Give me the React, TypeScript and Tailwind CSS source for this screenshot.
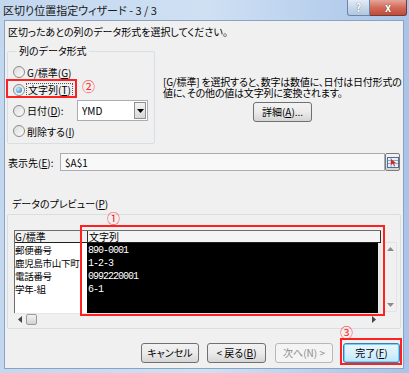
import React from 'react';

const ui = "font-['Noto_Sans_CJK_JP',sans-serif] [font-feature-settings:'palt']";

const Radio: React.FC<{ checked?: boolean }> = ({ checked }) => (
    <span className="w-[12px] h-[12px] shrink-0 rounded-full border border-[#8a8a8a] bg-gradient-to-br from-[#dcdcdc] to-[#fbfbfb] flex items-center justify-center">
        {checked && <span className="w-[6px] h-[6px] rounded-full bg-[radial-gradient(circle_at_35%_35%,#c4ecff,#1c6fb2)]" />}
    </span>
);

const Btn: React.FC<{ children: React.ReactNode; w: string; kind?: 'normal' | 'disabled' | 'focus' }> = ({ children, w, kind = 'normal' }) => {
    const base = 'h-[20px] rounded-[3px] border flex items-center justify-center text-[10px] leading-[12px]';
    if (kind === 'disabled') {
        return <div className={`${base} ${w} border-[#b5b9bc] bg-[#f4f4f4] text-[#8d8d8d]`}>{children}</div>;
    }
    if (kind === 'focus') {
        return (
            <div className={`${base} ${w} border-[#3c7fb1] bg-gradient-to-b from-[#eaf6fd] via-[#d9f0fc] to-[#bee6fd] shadow-[inset_0_0_0_1px_#6fd1ff] text-black`}>
                {children}
            </div>
        );
    }
    return (
        <div className={`${base} ${w} border-[#707070] bg-gradient-to-b from-[#f2f2f2] via-[#ebebeb] to-[#d5d5d5] text-black`}>{children}</div>
    );
};

export default function App() {
    return (
        <div className={`relative w-[409px] h-[373px] overflow-hidden flex flex-col bg-gradient-to-r from-[#c3d7ef] via-[#cfe0f3] to-[#a8c4e8] ${ui} text-black`}>
            {/* title bar */}
            <div className="h-[20px] shrink-0 flex items-start">
                <div className="pl-[3px] pt-[2px] text-[11px] leading-[16px] text-[#1a1a1a]">区切り位置指定ウィザード - 3 / 3</div>
                <div className="ml-auto mr-[2px] flex">
                    <div className="w-[23px] h-[16px] rounded-bl-[3px] border border-t-0 border-[#6d84a3] bg-gradient-to-b from-[#e3ecf7] via-[#c8d7ea] to-[#b3c7e0] flex items-center justify-center text-[11px] font-bold text-white [text-shadow:0_0_1px_#3a4a60]">
                        ?
                    </div>
                    <div className="w-[37px] h-[16px] rounded-br-[3px] border border-l-0 border-t-0 border-[#6d3d3a] bg-gradient-to-b from-[#e5a598] via-[#d16b5a] to-[#c34a37] flex items-center justify-center text-[11px] font-bold text-white [text-shadow:0_0_1px_#4a1a10]">
                        x
                    </div>
                </div>
            </div>

            {/* client area */}
            <div className="ml-[4px] mr-[5px] mb-[4px] flex-1 bg-[#f0f0f0] border border-[#8ba3c2] pl-[3px] pr-[3px] flex flex-col">
                <div className="mt-[4px] text-[10px] leading-[14px]">区切ったあとの列のデータ形式を選択してください。</div>

                <div className="flex mt-[5px]">
                    <fieldset className="ml-[-1px] w-[148px] min-w-0 shrink-0 h-[100px] border border-[#d5dfe5] rounded-[2px] pl-[5px]">
                        <legend className="ml-[4px] px-[2px] text-[10px] leading-[14px]">列のデータ形式</legend>
                        <div className="mt-[7px] h-[14px] flex items-center gap-[2px] text-[10px]">
                            <Radio />
                            <span>G/標準(<u>G</u>)</span>
                        </div>
                        <div className="mt-[4px] h-[14px] flex items-center gap-[1px] text-[10px]">
                            <Radio checked />
                            <span className="border border-dotted border-[#555] px-[1px] leading-[12px]">文字列(<u>T</u>)</span>
                        </div>
                        <div className="mt-[3px] h-[21px] flex items-center text-[10px]">
                            <Radio />
                            <span className="ml-[2px] w-[50px]">日付(<u>D</u>):</span>
                            <div className="w-[71px] h-[21px] border border-[#abadb3] bg-white flex items-center">
                                <span className="pl-[4px] text-[10px]">YMD</span>
                                <div className="ml-auto mr-[1px] w-[12px] h-[17px] border border-[#8e8f8f] bg-gradient-to-b from-[#f2f2f2] to-[#d8d8d8] flex items-center justify-center">
                                    <svg width="7" height="4" viewBox="0 0 7 4">
                                        <path d="M0 0h7L3.5 4z" fill="#000" />
                                    </svg>
                                </div>
                            </div>
                        </div>
                        <div className="mt-[3px] h-[14px] flex items-center gap-[2px] text-[10px]">
                            <Radio />
                            <span>削除する(<u>I</u>)</span>
                        </div>
                    </fieldset>

                    <div className="ml-[8px] mt-[32px] flex flex-col">
                        <div className="text-[10px] leading-[11px] tracking-[-0.2px] whitespace-nowrap">
                            [G/標準] を選択すると、数字は数値に、日付は日付形式の
                            <br />
                            値に、その他の値は文字列に変換されます。
                        </div>
                        <div className="mt-[4px] ml-[90px]">
                            <Btn w="w-[59px]">
                                詳細(<u>A</u>)...
                            </Btn>
                        </div>
                    </div>
                </div>

                <div className="mt-[9px] h-[18px] flex items-center">
                    <span className="w-[52px] text-[10px]">表示先(<u>E</u>):</span>
                    <div className="w-[325px] h-[18px] border border-[#abadb3] bg-[#f8f8f8] flex items-center pl-[4px] text-[10px]">$A$1</div>
                    <div className="w-[15px] h-[18px] border border-[#7a7a7a] rounded-[2px] bg-gradient-to-b from-[#f4f4f4] to-[#d4d4d4] flex items-center justify-center">
                        <svg width="12" height="11" viewBox="0 0 12 11">
                            <rect x="0.5" y="0.5" width="11" height="10" fill="#e8f0fa" stroke="#4f6f99" />
                            <path d="M1 3.5h10M1 6.5h10M4 1v9" stroke="#8ea8c8" strokeWidth="1" />
                            <path d="M4 2l5 4-2 0 1 3-1 0.5-1-3-2 1.5z" fill="#d42a1a" />
                        </svg>
                    </div>
                </div>

                <div className="mt-[26px] ml-[4px] text-[10px] leading-[14px]">
                    データのプレビュー(<u>P</u>)
                </div>
                <div className="mt-[3px] ml-[-1px] w-[394px] h-[115px] border border-[#d5dfe5] rounded-[2px] pl-[6px] pt-[15px] flex flex-col">
                    <div className="flex">
                        <div className="w-[367px] flex flex-col border-l border-t border-[#6d6d6d]">
                            <div className="h-[12px] flex text-[10px] leading-[11px] border-b border-[#202020]">
                                <div className="w-[72px] bg-[#f0f0f0]">G/標準</div>
                                <div className="flex-1 bg-[#f4f4f4] border-l border-r border-[#303030] pl-[1px]">文字列</div>
                            </div>
                            <div className="h-[70px] flex">
                                <div className="w-[72px] shrink-0 bg-white pt-[1px] text-[9.5px] leading-[13px] tracking-[-0.3px] whitespace-nowrap overflow-hidden">
                                    <div>郵便番号</div>
                                    <div>鹿児島市山下町</div>
                                    <div>電話番号</div>
                                    <div>学年-組</div>
                                </div>
                                <div className="flex-1 bg-black text-white pt-[1px] pl-[1px] font-['Liberation_Mono',monospace] text-[10px] leading-[13px] tracking-[-1px] border-r-[3px] border-[#e8e8e8]">
                                    <div>890-0001</div>
                                    <div>1-2-3</div>
                                    <div>0992220001</div>
                                    <div>6-1</div>
                                </div>
                            </div>
                        </div>
                        <div className="ml-[2px] mt-[12px] w-[14px] h-[70px] border border-[#e3e3e3] flex flex-col items-center justify-between py-[4px]">
                            <svg width="7" height="4" viewBox="0 0 7 4">
                                <path d="M0 4h7L3.5 0z" fill="#8a8a8a" />
                            </svg>
                            <svg width="7" height="4" viewBox="0 0 7 4">
                                <path d="M0 0h7L3.5 4z" fill="#8a8a8a" />
                            </svg>
                        </div>
                    </div>
                    <div className="w-[367px] h-[12px] flex items-center border-t border-[#e6e6e6]">
                        <svg className="ml-[4px]" width="4" height="7" viewBox="0 0 4 7">
                            <path d="M4 0v7L0 3.5z" fill="#444" />
                        </svg>
                        <div className="ml-[4px] w-[11px] h-[11px] border border-[#9a9a9a] rounded-[2px] bg-gradient-to-b from-[#f3f3f3] to-[#d2d2d2]" />
                        <svg className="ml-auto mr-[5px]" width="4" height="7" viewBox="0 0 4 7">
                            <path d="M0 0v7L4 3.5z" fill="#444" />
                        </svg>
                    </div>
                </div>

                <div className="mt-[14px] flex justify-end">
                    <Btn w="w-[58px]">キャンセル</Btn>
                    <div className="ml-[8px]">
                        <Btn w="w-[59px]">
                            &lt; 戻る(<u>B</u>)
                        </Btn>
                    </div>
                    <div className="ml-[9px]">
                        <Btn w="w-[58px]" kind="disabled">
                            次へ(N) &gt;
                        </Btn>
                    </div>
                    <div className="ml-[10px]">
                        <Btn w="w-[57px]" kind="focus">
                            完了(<u>F</u>)
                        </Btn>
                    </div>
                </div>
            </div>

            {/* annotations */}
            <div className="absolute left-[6px] top-[79px] w-[71px] h-[19px] border-2 border-[#ff2020]" />
            <div className="absolute left-[82px] top-[78px] text-[13px] leading-[15px] text-[#ff2020]">②</div>
            <div className="absolute left-[80px] top-[225px] w-[305px] h-[91px] border-2 border-[#ff2020]" />
            <div className="absolute left-[107px] top-[210px] text-[13px] leading-[15px] text-[#ff2020]">①</div>
            <div className="absolute left-[340px] top-[338px] w-[62px] h-[27px] border-2 border-[#ff2020]" />
            <div className="absolute left-[340px] top-[324px] text-[13px] leading-[15px] text-[#ff2020]">③</div>
        </div>
    );
}
